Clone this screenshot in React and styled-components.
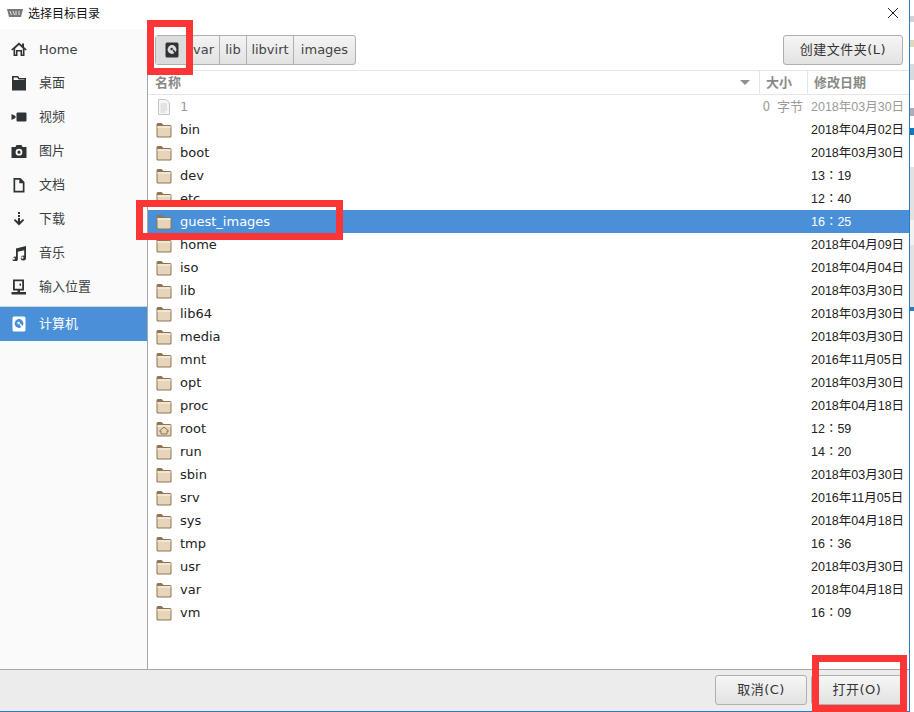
import styled, { createGlobalStyle } from "styled-components";

const GlobalStyle = createGlobalStyle`
  html, body {
    margin: 0;
    padding: 0;
    background: #fff;
  }
  body {
    width: 914px;
    height: 712px;
    overflow: hidden;
    font-family: "DejaVu Sans", "Noto Sans CJK SC", sans-serif;
    font-size: 13px;
    color: #2e3436;
  }
`;

const Screen = styled.div`
  position: relative;
  display: flex;
  width: 914px;
  height: 712px;
  overflow: hidden;
`;

const Dialog = styled.div`
  display: flex;
  flex-direction: column;
  width: 910px;
  height: 712px;
  box-sizing: border-box;
  background: #fff;
  border-right: 1px solid #2a7bc4;
  border-bottom: 1px solid #2a7bc4;
`;

const TitleBar = styled.header`
  display: flex;
  align-items: center;
  height: 29px;
  box-sizing: border-box;
  padding: 0 10px 3px 7px;
  flex: none;
`;

const TitleText = styled.span`
  margin-left: 5px;
  padding-bottom: 2px;
  font-family: "Noto Sans CJK SC", sans-serif;
  font-size: 12px;
  color: #111;
  flex: 1;
`;

const Body = styled.div`
  display: flex;
  flex: 1;
  min-height: 0;
`;

const Sidebar = styled.nav`
  width: 147px;
  flex: none;
  padding-top: 3px;
  background: #fafafa;
  border-right: 1px solid #a6a6a6;
`;

const Place = styled.div`
  display: flex;
  align-items: center;
  height: 34px;
  padding-left: 11px;
  gap: 12px;
  font-size: 13px;
  color: ${(p) => (p.$active ? "#fff" : "#3a3f41")};
  background: ${(p) => (p.$active ? "#4a90d9" : "transparent")};
`;

const PlaceLabel = styled.span`
  padding-bottom: ${(p) => (p.$latin ? 0 : 3)}px;
`;

const DiskSlot = styled.span`
  display: flex;
  justify-content: center;
  width: 16px;
`;

const PlaceSep = styled.div`
  height: 1px;
  margin-top: 2px;
  background: #d4d4d4;
`;

const Main = styled.main`
  flex: 1;
  min-width: 0;
  display: flex;
  flex-direction: column;
`;

const Toolbar = styled.div`
  display: flex;
  justify-content: space-between;
  align-items: flex-start;
  height: 41px;
  box-sizing: border-box;
  padding: 6px 6px 0 7px;
  flex: none;
`;

const PathBar = styled.div`
  display: flex;
  height: 30px;
  box-sizing: border-box;
  border: 1px solid #b0b0b0;
  border-radius: 3px;
  background: linear-gradient(#f4f4f4, #e2e2e2);
`;

const Crumb = styled.div`
  display: flex;
  align-items: center;
  justify-content: center;
  width: ${(p) => p.$w}px;
  box-sizing: border-box;
  padding-bottom: 1px;
  border-left: ${(p) => (p.$first ? "none" : "1px solid #b0b0b0")};
  background: ${(p) => (p.$first ? "#dcdcdc" : "transparent")};
  font-size: 13px;
  color: #444;
`;

const Button = styled.button`
  width: ${(p) => p.$w}px;
  height: 30px;
  padding: 0 0 3px;
  border: 1px solid #b0b0b0;
  border-radius: 3px;
  background: linear-gradient(#f6f6f6, #e2e2e2);
  font-family: "DejaVu Sans", "Noto Sans CJK SC", sans-serif;
  font-size: 13px;
  letter-spacing: 0.5px;
  color: #333;
`;

const ListHead = styled.div`
  display: grid;
  grid-template-columns: 1fr 48px 102px;
  height: 23px;
  flex: none;
  border-top: 1px solid #e6e6e6;
  border-bottom: 1px solid #e6e6e6;
  font-family: "Noto Sans CJK SC", sans-serif;
  font-weight: 700;
  font-size: 13px;
  color: #888a85;
`;

const HeadCell = styled.div`
  display: flex;
  align-items: center;
  justify-content: space-between;
  padding: 0 9px 3px ${(p) => (p.$first ? 7 : 6)}px;
  border-left: ${(p) => (p.$first ? "none" : "1px solid #e6e6e6")};
`;

const SortArrow = styled.span`
  width: 0;
  height: 0;
  margin-top: 3px;
  border-left: 5px solid transparent;
  border-right: 5px solid transparent;
  border-top: 5px solid #8e9192;
`;

const List = styled.div`
  flex: 1;
  min-height: 0;
`;

const Row = styled.div`
  display: grid;
  grid-template-columns: 1fr 60px 100px;
  align-items: center;
  height: 23px;
  padding-left: 8px;
  background: ${(p) => (p.$selected ? "#4a90d9" : "transparent")};
  color: ${(p) => (p.$selected ? "#fff" : p.$dim ? "#9a9c98" : "#222")};
`;

const NameCell = styled.div`
  display: flex;
  align-items: center;
  gap: 8px;
`;

const SizeCell = styled.div`
  text-align: right;
  padding: 0 6px 2px 0;
  font-family: "Noto Sans CJK SC", sans-serif;
  font-size: 13px;
  word-spacing: 4px;
  white-space: nowrap;
`;

const DateCell = styled.div`
  font-family: "Liberation Sans", "Noto Sans CJK TC", sans-serif;
  font-size: 12.5px;
  white-space: nowrap;
  padding: 0 0 2px 2px;
`;

const ActionBar = styled.footer`
  display: flex;
  justify-content: flex-end;
  gap: 4px;
  height: 42px;
  flex: none;
  box-sizing: border-box;
  padding: 5px 6px 0 0;
  background: #ececec;
  border-top: 1px solid #a6a6a6;
`;

const Strip = styled.aside`
  display: flex;
  flex-direction: column;
  width: 4px;
  flex: none;
`;

const StripBlock = styled.div`
  height: ${(p) => p.$h}px;
  background: ${(p) => p.$c};
  flex: none;
`;

const Highlight = styled.div`
  position: absolute;
  left: ${(p) => p.$x}px;
  top: ${(p) => p.$y}px;
  width: ${(p) => p.$w}px;
  height: ${(p) => p.$h}px;
  box-sizing: border-box;
  border: 7px solid #fc3636;
  pointer-events: none;
`;

const DiskIcon = ({ light }) => {
  const fg = light ? "#fff" : "#2e3436";
  const bg = light ? "#4a90d9" : "#dcdcdc";
  return (
    <svg width="14" height="16" viewBox="0 0 14 16">
      <rect x="0.5" y="0.5" width="13" height="15" rx="1.5" fill={fg} />
      <circle cx="7" cy="7.5" r="4.4" fill={bg} />
      <circle cx="6.6" cy="7" r="1.2" fill={fg} />
      <path d="M7.5 8.5 L10 12 L11.5 11 L8.5 7.5 Z" fill={fg} />
    </svg>
  );
};

const Glyph = ({ children }) => (
  <svg width="16" height="16" viewBox="0 0 16 16" fill="#2e3436" style={{ flex: "none" }}>
    {children}
  </svg>
);

const sideIcons = {
  home: (
    <path
      d="M8 1.5 L11 4.2 V2.5 H13 V6 L15.8 8.6 L14.8 9.6 L13.5 8.5 V15 H9.5 V10.5 H6.5 V15 H2.5 V8.5 L1.2 9.6 L0.2 8.6 Z M8 4 L4.2 7.6 V13.4 H5 V9 H11 V13.4 H11.8 V7.6 Z"
      fillRule="evenodd"
    />
  ),
  desktop: <path d="M1 1 H7 L8.5 3 H15 V15.5 H1 Z M2.6 2.6 V5 H13.5 V4.6 H7.7 L6.2 2.6 Z" fillRule="evenodd" />,
  video: (
    <>
      <rect x="5.5" y="3.5" width="10" height="9" rx="1" />
      <path d="M0.5 5 L4.5 7 V9 L0.5 11 Z" />
    </>
  ),
  photo: (
    <path
      d="M5.5 2 H10.5 L11.5 4 H15.5 V15 H0.5 V4 H4.5 Z M8 5.8 A3.4 3.4 0 1 0 8 12.6 A3.4 3.4 0 1 0 8 5.8 Z M8 7.6 A1.6 1.6 0 1 1 8 10.8 A1.6 1.6 0 1 1 8 7.6 Z"
      fillRule="evenodd"
    />
  ),
  doc: <path d="M2.5 1 H9.5 L13.5 5 V15.5 H2.5 Z M4.2 2.8 V13.8 H11.8 V6.2 H8.3 V2.8 Z" fillRule="evenodd" />,
  download: (
    <>
      <rect x="7" y="1" width="2" height="2" />
      <rect x="7" y="4" width="2" height="2" />
      <path d="M7 7 H9 V10.5 L12 8 L13.2 9.3 L8 14.5 L2.8 9.3 L4 8 L7 10.5 Z" />
    </>
  ),
  music: (
    <path
      d="M5 3.5 L15 1 V13 A2.6 2.4 0 1 1 13.2 10.8 V5.2 L6.8 6.8 V14 A2.6 2.4 0 1 1 5 11.8 Z M2.8 12.6 A1 1 0 1 0 2.8 14.8 A1 1 0 1 0 2.8 12.6 Z M11.4 11.6 A1 1 0 1 0 11.4 13.8 A1 1 0 1 0 11.4 11.6 Z"
      fillRule="evenodd"
    />
  ),
  location: (
    <path
      d="M2 0.5 H13 V11.5 H9 V13 H15 V15.5 H0.5 V13 H6.5 V11.5 H2 Z M3.8 2.2 V9.8 H11.2 V2.2 Z M8.6 4.6 H10 V6.8 H8.6 Z"
      fillRule="evenodd"
    />
  ),
};

const places = [
  ["home", "Home", true],
  ["desktop", "桌面"],
  ["video", "视频"],
  ["photo", "图片"],
  ["doc", "文档"],
  ["download", "下载"],
  ["music", "音乐"],
  ["location", "输入位置"],
];

const FolderIcon = ({ home }) => (
  <svg width="16" height="16" viewBox="0 0 16 16" style={{ flex: "none" }}>
    <path d="M0.5 2.5 Q0.5 1 2 1 H5.5 L7.5 3 H14 Q15.5 3 15.5 4.5 V14 Q15.5 15.5 14 15.5 H2 Q0.5 15.5 0.5 14 Z" fill="#8f7551" />
    <rect x="1.5" y="4" width="13" height="10.5" rx="0.8" fill="#e6d5bb" />
    <rect x="1.5" y="4" width="13" height="2" fill="#f1e6d4" />
    {home && <path d="M8 6 L3.5 10 H5 V13 H11 V10 H12.5 Z" fill="none" stroke="#8f7551" strokeWidth="1" />}
  </svg>
);

const FileIcon = () => (
  <svg width="16" height="16" viewBox="0 0 16 16" style={{ flex: "none" }}>
    <path d="M2.5 0.5 H10 L13.5 4 V15.5 H2.5 Z" fill="#f6f6f6" stroke="#c4c4c4" />
    <path d="M4.5 5 H11 M4.5 7 H11 M4.5 9 H11 M4.5 11 H11 M4.5 13 H9" stroke="#d0d0d0" />
  </svg>
);

const files = [
  { name: "1", size: "0 字节", date: "2018年03月30日", dim: true, file: true },
  { name: "bin", date: "2018年04月02日" },
  { name: "boot", date: "2018年03月30日" },
  { name: "dev", date: "13：19" },
  { name: "etc", date: "12：40" },
  { name: "guest_images", date: "16：25", selected: true },
  { name: "home", date: "2018年04月09日" },
  { name: "iso", date: "2018年04月04日" },
  { name: "lib", date: "2018年03月30日" },
  { name: "lib64", date: "2018年03月30日" },
  { name: "media", date: "2018年03月30日" },
  { name: "mnt", date: "2016年11月05日" },
  { name: "opt", date: "2018年03月30日" },
  { name: "proc", date: "2018年04月18日" },
  { name: "root", date: "12：59", home: true },
  { name: "run", date: "14：20" },
  { name: "sbin", date: "2018年03月30日" },
  { name: "srv", date: "2016年11月05日" },
  { name: "sys", date: "2018年04月18日" },
  { name: "tmp", date: "16：36" },
  { name: "usr", date: "2018年03月30日" },
  { name: "var", date: "2018年04月18日" },
  { name: "vm", date: "16：09" },
];

const stripBlocks = [
  [16, "#fff"], [6, "#d6cfdc"], [18, "#fff"], [7, "#e2d6bc"], [17, "#fff"],
  [16, "#d6dbe0"], [28, "#fff"], [8, "#b3aabd"], [12, "#fff"], [7, "#1277bf"],
  [32, "#fff"], [53, "#e2e2e2"], [25, "#f1f1f1"], [62, "#e2e2e2"], [4, "#2a7bc4"], [401, "#fff"],
];

export default function App() {
  return (
    <>
      <GlobalStyle />
      <Screen>
        <Dialog>
          <TitleBar>
            <svg width="16" height="10" viewBox="0 0 16 10">
              <path d="M0 1 H16 L14 9 H2 Z" fill="#77787a" />
              <path d="M3 3 L4.5 7 M6 3 L7.5 7 M9 3 V7 M12 3 V7" stroke="#e4e4e4" />
            </svg>
            <TitleText>选择目标目录</TitleText>
            <svg width="12" height="12" viewBox="0 0 12 12">
              <path d="M1 1 L11 11 M11 1 L1 11" stroke="#222" strokeWidth="1" />
            </svg>
          </TitleBar>
          <Body>
            <Sidebar>
              {places.map(([icon, label, latin]) => (
                <Place key={icon}>
                  <Glyph>{sideIcons[icon]}</Glyph>
                  <PlaceLabel $latin={latin}>{label}</PlaceLabel>
                </Place>
              ))}
              <PlaceSep />
              <Place $active>
                <DiskSlot>
                  <DiskIcon light />
                </DiskSlot>
                <PlaceLabel>计算机</PlaceLabel>
              </Place>
            </Sidebar>
            <Main>
              <Toolbar>
                <PathBar>
                  <Crumb $first $w={31}>
                    <DiskIcon />
                  </Crumb>
                  <Crumb $w={32}>var</Crumb>
                  <Crumb $w={27}>lib</Crumb>
                  <Crumb $w={47}>libvirt</Crumb>
                  <Crumb $w={62}>images</Crumb>
                </PathBar>
                <Button $w={120}>创建文件夹(L)</Button>
              </Toolbar>
              <ListHead>
                <HeadCell $first>
                  名称
                  <SortArrow />
                </HeadCell>
                <HeadCell>大小</HeadCell>
                <HeadCell>修改日期</HeadCell>
              </ListHead>
              <List>
                {files.map((f) => (
                  <Row key={f.name} $selected={f.selected} $dim={f.dim}>
                    <NameCell>
                      {f.file ? <FileIcon /> : <FolderIcon home={f.home} />}
                      {f.name}
                    </NameCell>
                    <SizeCell>{f.size}</SizeCell>
                    <DateCell>{f.date}</DateCell>
                  </Row>
                ))}
              </List>
            </Main>
          </Body>
          <ActionBar>
            <Button $w={92}>取消(C)</Button>
            <Button $w={92}>打开(O)</Button>
          </ActionBar>
        </Dialog>
        <Strip>
          {stripBlocks.map(([h, c], i) => (
            <StripBlock key={i} $h={h} $c={c} />
          ))}
        </Strip>
        <Highlight $x={147} $y={20} $w={46} $h={55} />
        <Highlight $x={136} $y={200} $w={207} $h={40} />
        <Highlight $x={812} $y={655} $w={95} $h={57} />
      </Screen>
    </>
  );
}
